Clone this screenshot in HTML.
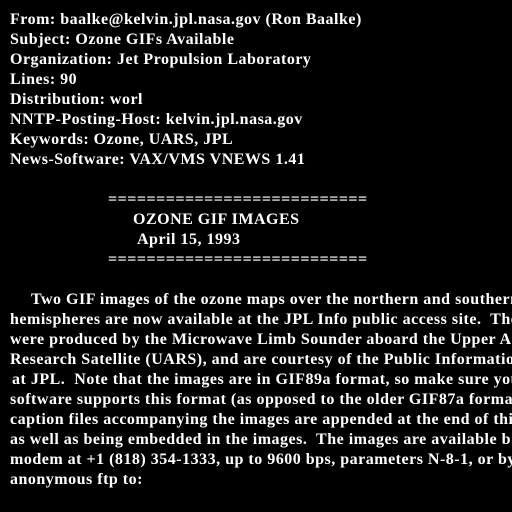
<!DOCTYPE html>
<html><head><style>
body{margin:0;width:512px;height:512px;background:#000;overflow:hidden;position:relative;}
.l{position:absolute;white-space:pre;color:#fff;font-family:"Liberation Serif",serif;font-size:16px;font-weight:bold;line-height:20px;letter-spacing:0.5px;}
</style></head><body>
<div class="l" style="left:10px;top:10px">From: baalke@kelvin.jpl.nasa.gov (Ron Baalke)</div>
<div class="l" style="left:10px;top:30px">Subject: Ozone GIFs Available</div>
<div class="l" style="left:10px;top:50px">Organization: Jet Propulsion Laboratory</div>
<div class="l" style="left:10px;top:70px">Lines: 90</div>
<div class="l" style="left:10px;top:90px">Distribution: worl</div>
<div class="l" style="left:10px;top:110px">NNTP-Posting-Host: kelvin.jpl.nasa.gov</div>
<div class="l" style="left:10px;top:130px">Keywords: Ozone, UARS, JPL</div>
<div class="l" style="left:10px;top:150px">News-Software: VAX/VMS VNEWS 1.41</div>
<div class="l" style="left:108px;top:190px">===========================</div>
<div class="l" style="left:133px;top:210px">OZONE GIF IMAGES</div>
<div class="l" style="left:137px;top:230px">April 15, 1993</div>
<div class="l" style="left:108px;top:250px">===========================</div>
<div class="l" style="left:31px;top:290px">Two GIF images of the ozone maps over the northern and southern</div>
<div class="l" style="left:10px;top:310px">hemispheres are now available at the JPL Info public access site.  The</div>
<div class="l" style="left:10px;top:330px">were produced by the Microwave Limb Sounder aboard the Upper A</div>
<div class="l" style="left:10px;top:350px">Research Satellite (UARS), and are courtesy of the Public Informatio</div>
<div class="l" style="left:12px;top:370px">at JPL.  Note that the images are in GIF89a format, so make sure you</div>
<div class="l" style="left:10px;top:390px">software supports this format (as opposed to the older GIF87a forma</div>
<div class="l" style="left:10px;top:410px">caption files accompanying the images are appended at the end of thi</div>
<div class="l" style="left:10px;top:430px">as well as being embedded in the images.  The images are available b</div>
<div class="l" style="left:10px;top:450px">modem at +1 (818) 354-1333, up to 9600 bps, parameters N-8-1, or by</div>
<div class="l" style="left:10px;top:470px">anonymous ftp to:</div>
</body></html>
